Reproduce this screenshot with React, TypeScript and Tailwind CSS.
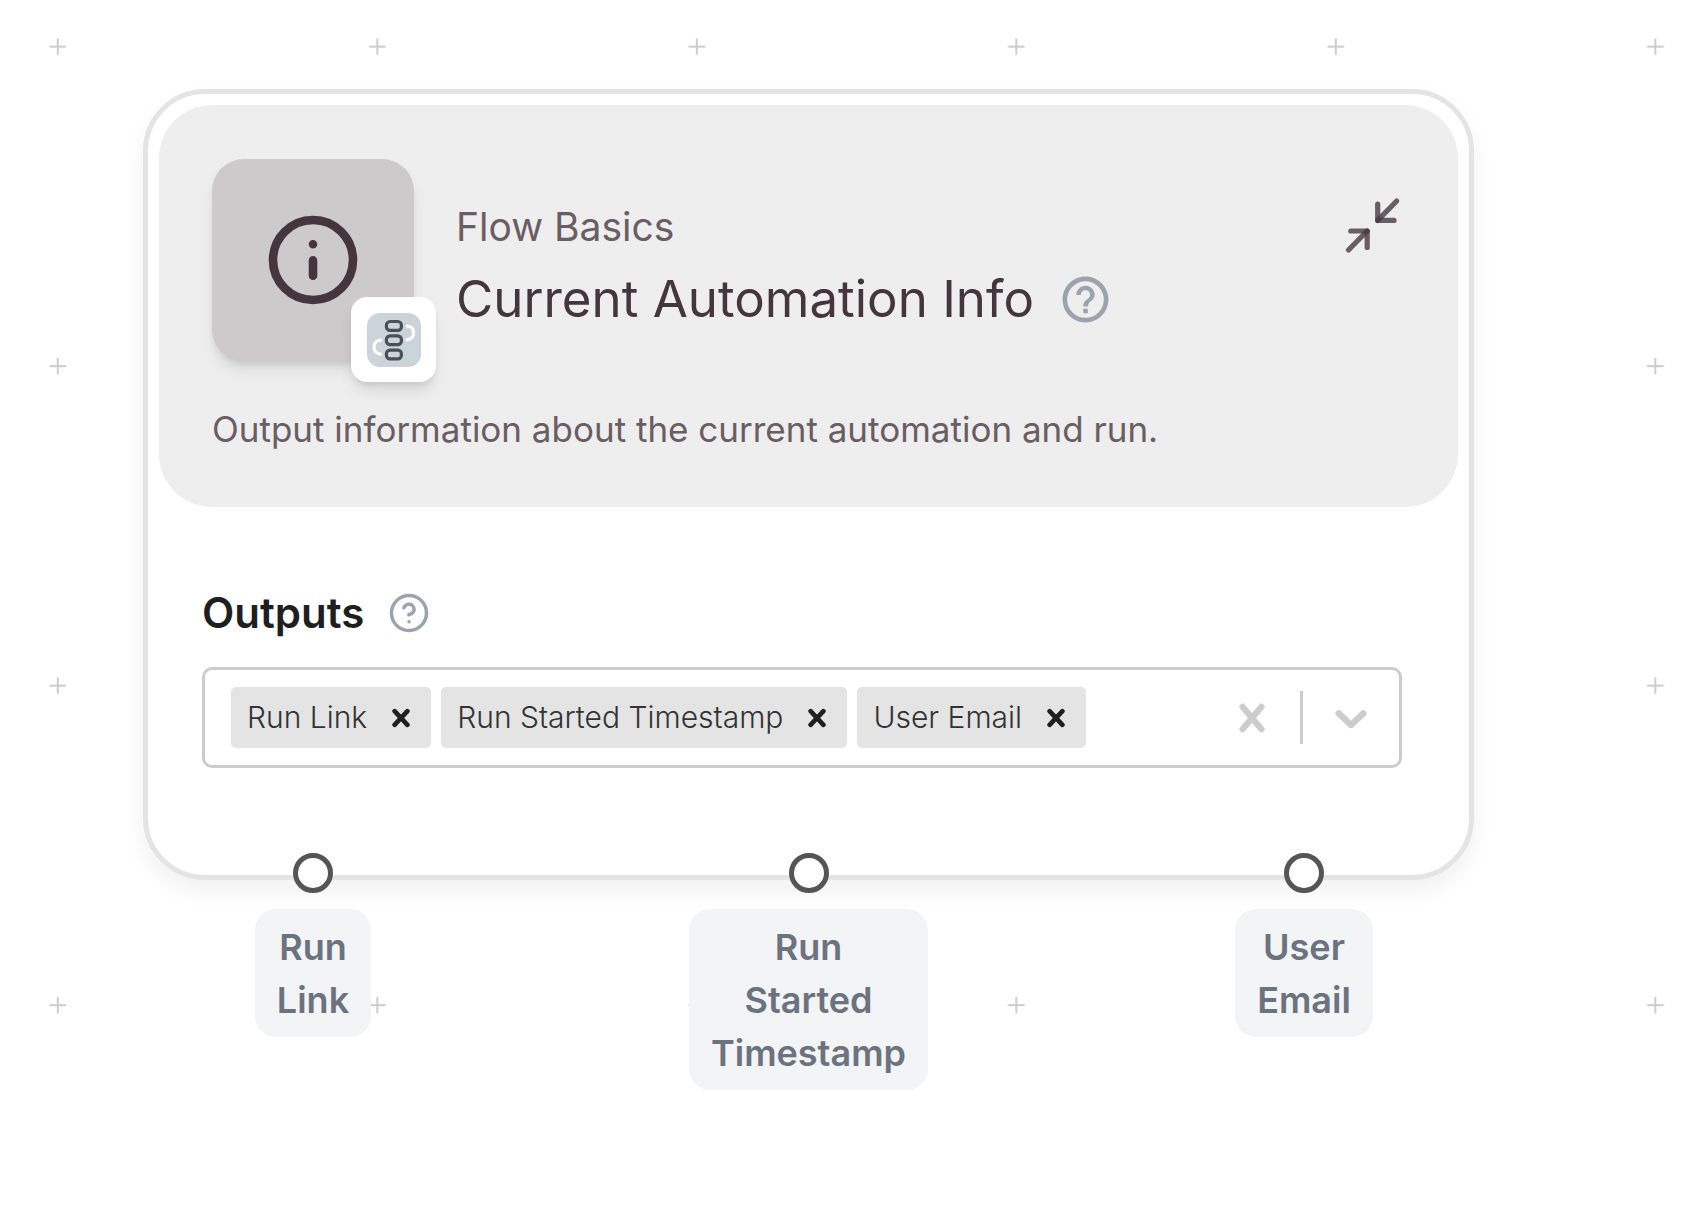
import { useState } from "react";

const OUTPUTS = ["Run Link", "Run Started Timestamp", "User Email"];

function CanvasGrid() {
  return (
    <svg className="absolute inset-0 h-full w-full" aria-hidden="true">
      <defs>
        <pattern id="plus-grid" x="-101.9" y="-113.1" width="319.5" height="319.5" patternUnits="userSpaceOnUse">
          <path d="M151.4 159.8h16.6M159.7 151.5v16.6" stroke="#cccccc" strokeWidth="2" />
        </pattern>
      </defs>
      <rect width="100%" height="100%" fill="url(#plus-grid)" />
    </svg>
  );
}

function InfoIcon() {
  return (
    <svg className="h-[106px] w-[106px]" viewBox="0 0 106 106" fill="none" stroke="#44363c" strokeWidth="8.6" strokeLinecap="round">
      <circle cx="53" cy="53" r="40" />
      <path d="M53 53.4v15.4M53 37.2v.01" />
    </svg>
  );
}

function ChainIcon() {
  return (
    <svg className="h-[54px] w-[54px]" viewBox="0 0 54 54" fill="none" strokeWidth="3.2" strokeLinecap="round">
      <rect width="54" height="54" rx="13" fill="#cbd4d9" />
      <g stroke="#4b5054">
        <rect x="19.4" y="8.5" width="15" height="8.8" rx="3.6" />
        <rect x="19.4" y="22.8" width="15" height="8.8" rx="3.6" />
        <rect x="19.4" y="37.1" width="15" height="8.8" rx="3.6" />
      </g>
      <path d="M40 13c4.200.4 6.600 3 6.600 6.800s-2.600 6.400-6.600 7M13.600 27.200c-4 .4-6.600 3.200-6.600 7s2.600 6.600 6.600 7" stroke="#ffffff" />
    </svg>
  );
}

function CollapseIcon() {
  return (
    <svg className="h-[60px] w-[60px]" viewBox="0 0 60 60" fill="none" stroke="#44363c" strokeOpacity="0.78" strokeWidth="5.2" strokeLinecap="round" strokeLinejoin="round">
      <path d="M51.7 6 32.7 25.400" />
      <path d="M32.7 9v16.400H49" />
      <path d="M3.500 55 22.200 36" />
      <path d="M5.800 36h16.400v16.400" />
    </svg>
  );
}

function HelpIcon() {
  return (
    <svg className="h-[55px] w-[55px]" viewBox="0 0 24 24" fill="#9ca3af">
      <path d="M11 18h2v-2h-2v2zm1-16C6.48 2 2 6.48 2 12s4.48 10 10 10 10-4.48 10-10S17.52 2 12 2zm0 18c-4.41 0-8-3.59-8-8s3.59-8 8-8 8 3.59 8 8-3.59 8-8 8zm0-14c-2.21 0-4 1.79-4 4h2c0-1.1.9-2 2-2s2 .9 2 2c0 2-3 1.75-3 5h2c0-2.25 3-2.5 3-5 0-2.21-1.79-4-4-4z" />
    </svg>
  );
}

function HelpRoundIcon() {
  return (
    <svg className="h-[42px] w-[42px]" viewBox="0 0 24 24" fill="none" stroke="#9ca3af" strokeWidth="2" strokeLinecap="round" strokeLinejoin="round">
      <circle cx="12" cy="12" r="10" />
      <path d="M9.09 9a3 3 0 0 1 5.83 1c0 2-3 3-3 3M12 17h.01" />
    </svg>
  );
}

interface ChipProps {
  label: string;
  onRemove: () => void;
}

function Chip({ label, onRemove }: ChipProps) {
  return (
    <li className="flex h-[61px] items-center rounded-[5px] bg-[#e4e4e4] pl-4">
      <span className="pr-1 text-[30px] font-light text-[#333333]">{label}</span>
      <button type="button" onClick={onRemove} aria-label={`Remove ${label}`} className="flex h-full w-[60px] items-center justify-center">
        <svg className="h-5 w-5" viewBox="0 0 20 20" stroke="#1f1f1f" strokeWidth="4.6" strokeLinecap="round">
          <path d="M3.6 3.1 16.4 16.9M16.4 3.1 3.6 16.9" />
        </svg>
      </button>
    </li>
  );
}

function OutputHandle({ label }: { label: string }) {
  return (
    <div className="flex w-60 flex-col items-center gap-4">
      <div className="h-10 w-10 rounded-full border-[5px] border-[#555555] bg-white" />
      <div className="w-min rounded-[21px] bg-[#f3f4f6] px-[22px] pt-3 pb-2.5 text-center text-[36px] leading-[53px] font-semibold text-[#6b7280]">
        {label}
      </div>
    </div>
  );
}

export default function App() {
  const [selected, setSelected] = useState(OUTPUTS);

  return (
    <main className="relative min-h-screen overflow-hidden bg-white pt-[89px] pr-[224px] pb-[100px] pl-[143px] font-['Inter',sans-serif]">
      <CanvasGrid />
      <section className="relative rounded-[62px] border-[5px] border-[#e4e4e4] bg-white p-[11px] shadow-[0_11px_22px_rgba(0,0,0,0.06)]">
        <header className="rounded-[53px] bg-[#eeeeee] px-[53px] pt-[54px] pb-[50px]">
          <div className="flex items-start gap-[42px]">
            <div className="relative flex h-[202px] w-[202px] shrink-0 items-center justify-center rounded-[32px] bg-[#cccacb] shadow-[0_11px_16px_-3px_rgba(0,0,0,0.1),0_5px_6px_-2px_rgba(0,0,0,0.08)]">
              <InfoIcon />
              <div className="absolute -right-[22px] -bottom-[21px] flex h-[85px] w-[85px] items-center justify-center rounded-2xl bg-white shadow-[0_11px_16px_-3px_rgba(0,0,0,0.1),0_5px_6px_-2px_rgba(0,0,0,0.08)]">
                <ChainIcon />
              </div>
            </div>
            <div className="min-w-0 flex-1 pt-9">
              <p className="text-[39px] leading-[64px] text-[#6a5d63]">Flow Basics</p>
              <div className="flex items-center gap-6">
                <h1 className="text-[51px] leading-[80px] text-[#44363c]">Current Automation Info</h1>
                <button type="button" aria-label="About this block">
                  <HelpIcon />
                </button>
              </div>
            </div>
            <button type="button" aria-label="Collapse" className="mt-9">
              <CollapseIcon />
            </button>
          </div>
          <p className="mt-10 text-[35px] leading-[56px] text-[#6a5d63]">
            Output information about the current automation and run.
          </p>
        </header>

        <div className="pt-[74px] pr-[56px] pb-[96px] pl-[43px]">
          <div className="flex items-center gap-6">
            <label htmlFor="outputs" className="text-[42px] leading-[64px] font-semibold text-[#1f1f1f]">
              Outputs
            </label>
            <button type="button" aria-label="About outputs">
              <HelpRoundIcon />
            </button>
          </div>
          <div className="mt-[22px] flex h-[101px] items-center rounded-[10px] border-[3px] border-[#cccccc] pl-[26px]">
            <ul className="flex gap-[10px] whitespace-nowrap">
              {selected.map((name) => (
                <Chip key={name} label={name} onRemove={() => setSelected(selected.filter((s) => s !== name))} />
              ))}
            </ul>
            <input id="outputs" type="text" className="min-w-0 flex-1 bg-transparent px-3 text-[30px] font-light outline-none" />
            <button type="button" aria-label="Clear all" onClick={() => setSelected([])} className="flex h-full w-[96px] shrink-0 items-center justify-center">
              <svg className="h-8 w-8" viewBox="0 0 32 32" stroke="#cccccc" strokeWidth="6.4" strokeLinecap="round">
                <path d="M6.7 5 25.3 27M25.3 5 6.7 27" />
              </svg>
            </button>
            <div className="h-[53px] w-[3px] shrink-0 bg-[#cccccc]" />
            <button type="button" aria-label="Open menu" onClick={() => setSelected(OUTPUTS)} className="flex h-full w-[96px] shrink-0 items-center justify-center">
              <svg className="h-8 w-8" viewBox="0 0 32 32" fill="none" stroke="#cccccc" strokeWidth="6.4" strokeLinecap="round" strokeLinejoin="round">
                <path d="M3.7 11.4 16 23 28.3 11.4" />
              </svg>
            </button>
          </div>
        </div>
      </section>

      <div className="relative -mt-[27px] flex items-start justify-between px-[50px]">
        {OUTPUTS.map((name) => (
          <OutputHandle key={name} label={name} />
        ))}
      </div>
    </main>
  );
}
